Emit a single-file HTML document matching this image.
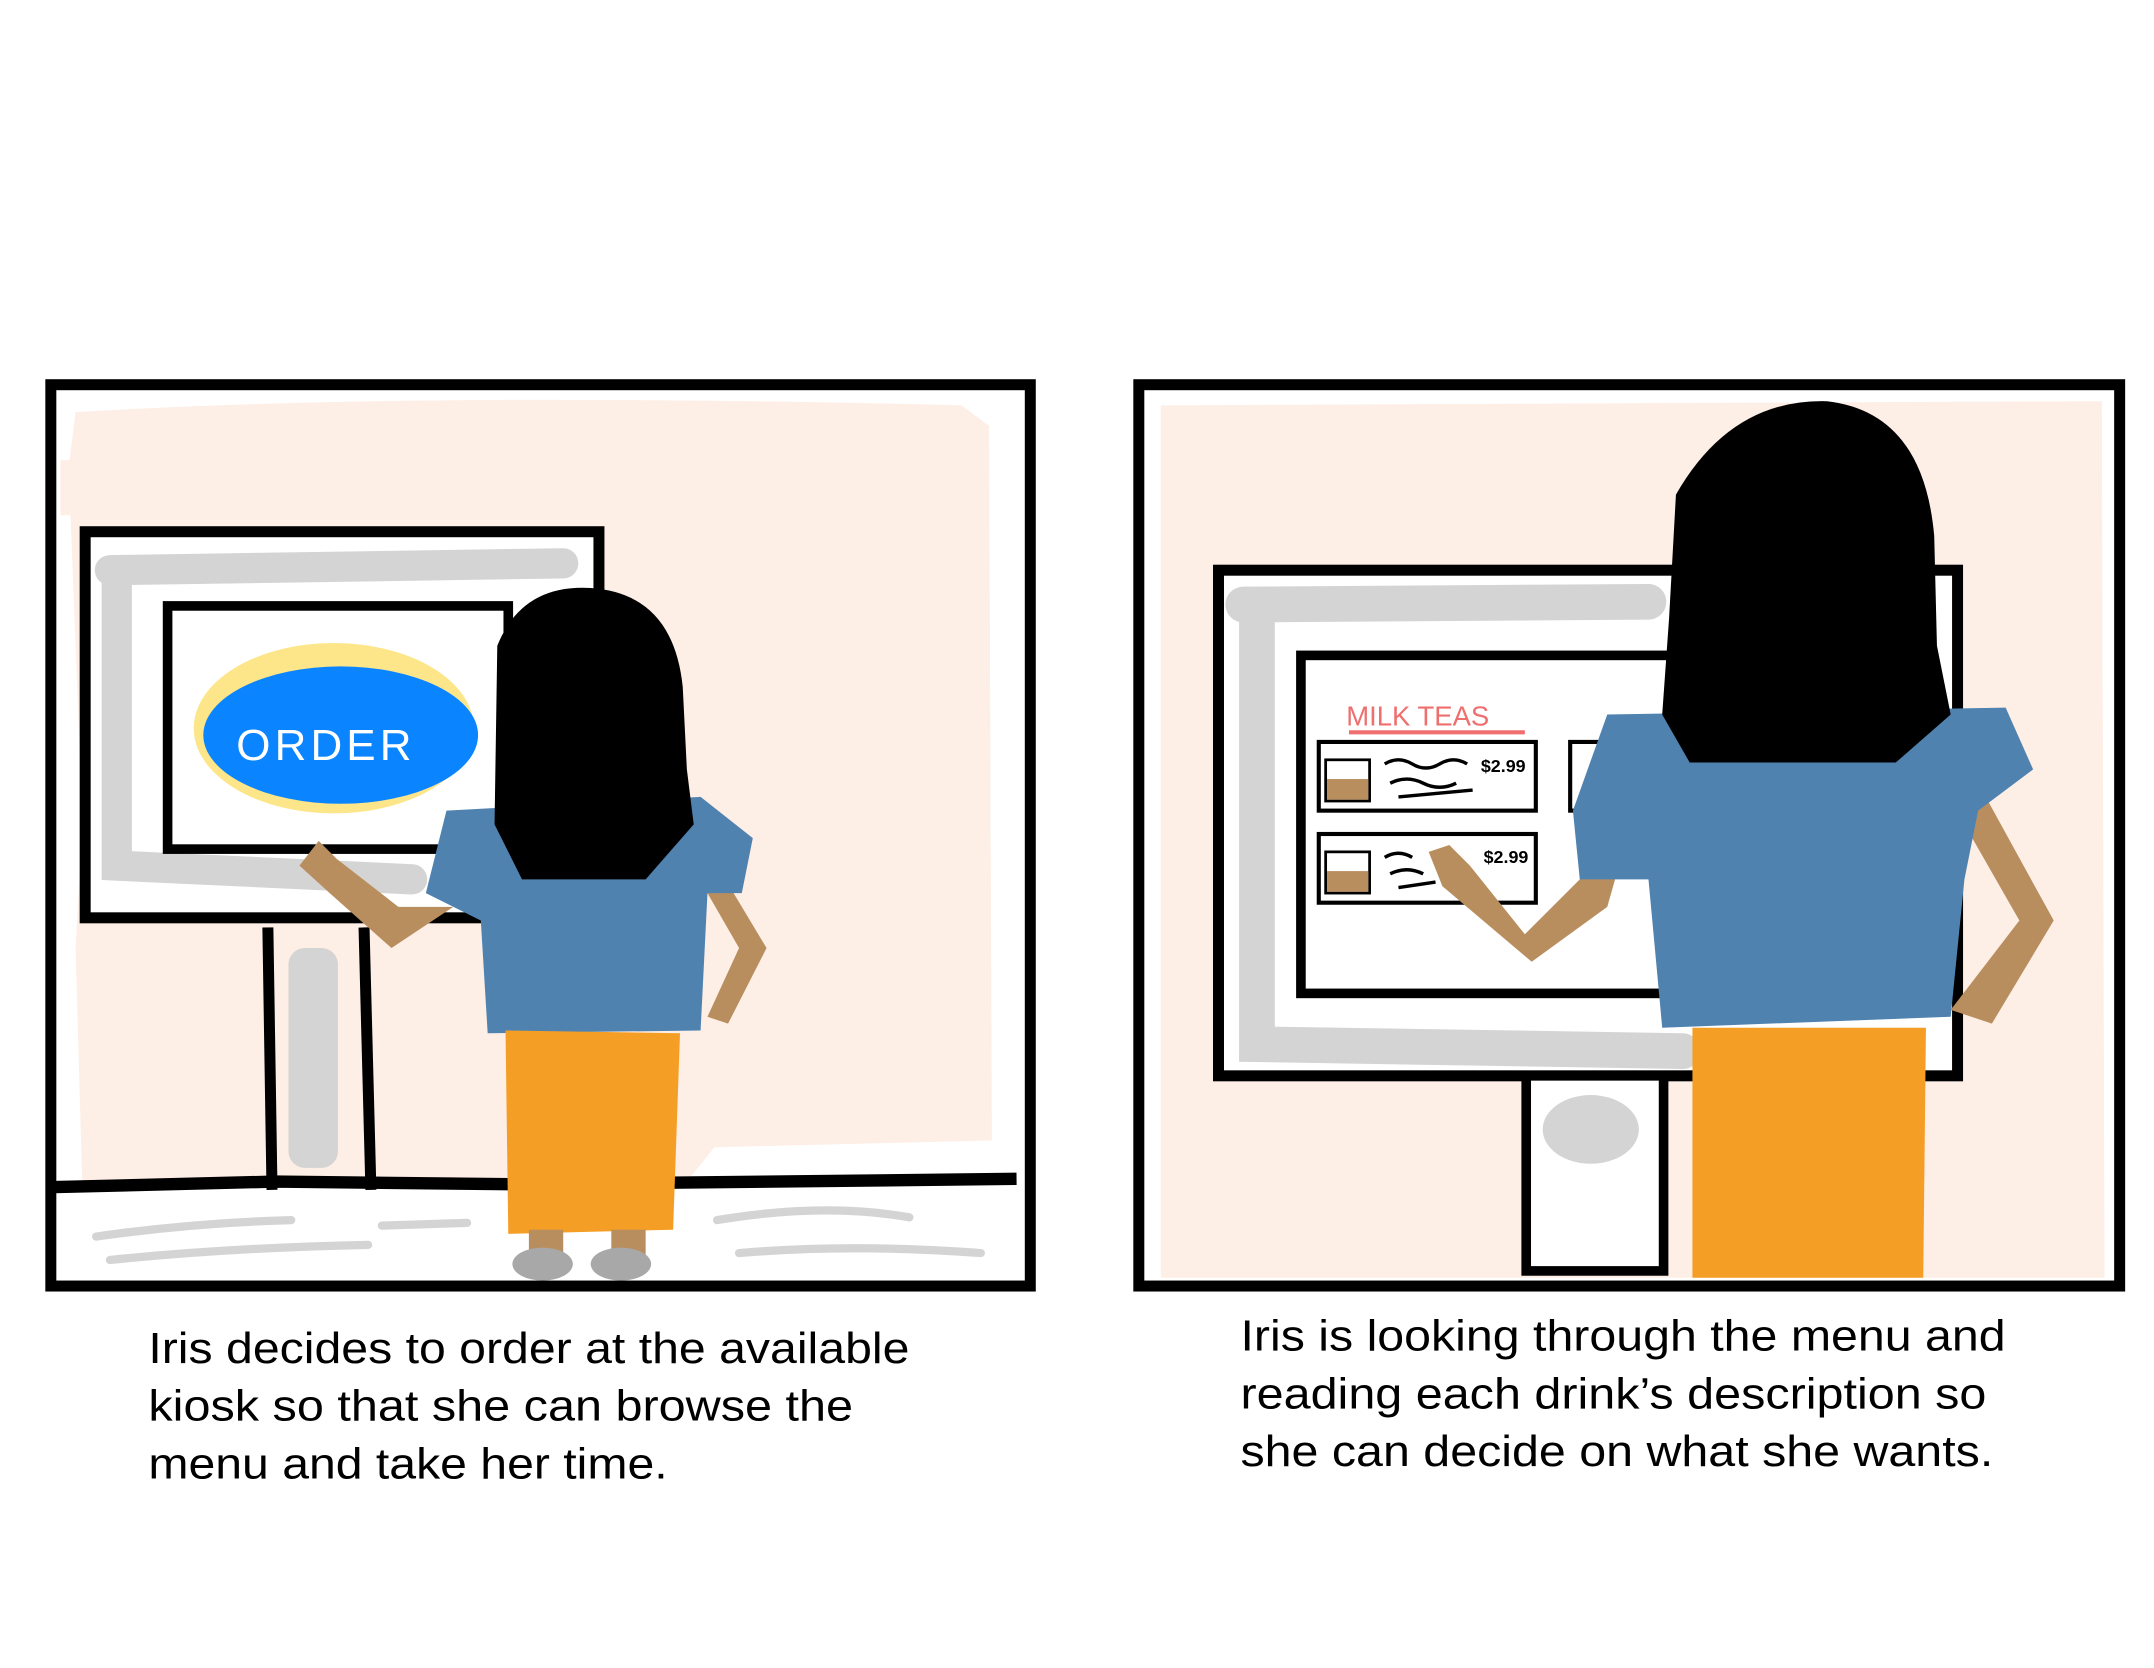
<!DOCTYPE html>
<html><head><meta charset="utf-8"><style>
html,body{margin:0;padding:0;background:#fff;width:2154px;height:1668px;overflow:hidden}
svg{display:block}
text{font-family:"Liberation Sans",sans-serif}
</style></head><body>
<svg width="2154" height="1668" viewBox="0 0 1568 1214" preserveAspectRatio="none" xmlns="http://www.w3.org/2000/svg">
<rect width="1568" height="1214" fill="#fff"/>
<!-- PANEL 1 -->
<g>
<path d="M55 300 Q300 285 700 295 L720 310 L722 830 L520 835 L500 860 L60 865 L55 690 L60 600 L50 340 Z" fill="#fdeee6"/>
<rect x="44" y="335" width="400" height="40" fill="#fdeee6"/>
<path d="M62 385 L436 385 L436 668 L62 668 Z" fill="#fff"/>
<path d="M80 415 L410 410 M85 420 L85 630 L300 640" stroke="#d4d4d4" stroke-width="22" fill="none" stroke-linecap="round"/>
<rect x="62" y="387" width="374" height="281" fill="none" stroke="#000" stroke-width="8"/>
<rect x="122" y="441" width="248" height="177" fill="#fff" stroke="#000" stroke-width="7"/>
<ellipse cx="243" cy="530" rx="102" ry="62" fill="#fde68a"/>
<ellipse cx="248" cy="535" rx="100" ry="50" fill="#0a84ff"/>
<text x="172" y="553" font-size="32" fill="#fff" letter-spacing="3">ORDER</text>
<rect x="210" y="690" width="36" height="160" fill="#d4d4d4" rx="12"/>
<line x1="195" y1="675" x2="198" y2="866" stroke="#000" stroke-width="8"/>
<line x1="265" y1="675" x2="270" y2="866" stroke="#000" stroke-width="8"/>
<path d="M40 864 L200 860 L380 862 L740 858" stroke="#000" stroke-width="9" fill="none"/>
<path d="M70 900 Q140 890 212 888 M80 917 Q170 908 268 906 M278 892 L340 890 M522 888 Q600 875 662 886 M538 912 Q620 905 714 912" stroke="#d4d4d4" stroke-width="6" fill="none" stroke-linecap="round"/>
<path d="M232 612 L218 630 L240 650 L285 690 L330 660 L290 660 L245 625 Z" fill="#b98e5f"/>
<path d="M528 640 L558 690 L530 745 L515 740 L538 690 L515 650 Z" fill="#b98e5f"/>
<path d="M325 590 L510 580 L548 610 L540 650 L515 650 L510 750 L355 752 L350 670 L310 650 Z" fill="#5082b0"/>
<path d="M368 750 L495 752 L490 895 L370 898 Z" fill="#f59e25"/>
<rect x="385" y="895" width="25" height="20" fill="#b98e5f"/><rect x="445" y="895" width="25" height="20" fill="#b98e5f"/>
<ellipse cx="395" cy="920" rx="22" ry="12" fill="#a8a8a8"/><ellipse cx="452" cy="920" rx="22" ry="12" fill="#a8a8a8"/>
<path d="M362 470 Q380 425 430 428 Q490 432 497 500 L500 560 L505 600 L470 640 L380 640 L360 600 Z" fill="#000"/>
<rect x="37" y="280" width="713" height="656" fill="none" stroke="#000" stroke-width="8"/>
</g>
<!-- PANEL 2 -->
<g>
<path d="M845 295 L1530 292 L1532 930 L845 930 Z" fill="#fdeee6"/>
<rect x="887" y="415" width="538" height="368" fill="#fff"/>
<path d="M905 440 L1200 438 M915 450 L915 760 L1225 765" stroke="#d4d4d4" stroke-width="26" fill="none" stroke-linecap="round"/>
<rect x="887" y="415" width="538" height="368" fill="none" stroke="#000" stroke-width="8"/>
<rect x="947" y="477" width="278" height="246" fill="#fff" stroke="#000" stroke-width="7"/>
<rect x="1111" y="783" width="100" height="142" fill="#fff" stroke="#000" stroke-width="7"/>
<ellipse cx="1158" cy="822" rx="35" ry="25" fill="#d4d4d4"/>
<text x="980" y="528" font-size="20" fill="#ef6f6f">MILK  TEAS</text>
<line x1="982" y1="533" x2="1110" y2="533" stroke="#ef6f6f" stroke-width="3"/>
<rect x="960" y="540" width="158" height="50" fill="none" stroke="#000" stroke-width="3"/>
<rect x="960" y="607" width="158" height="50" fill="none" stroke="#000" stroke-width="3"/>
<rect x="1143" y="540" width="40" height="50" fill="none" stroke="#000" stroke-width="3"/>
<rect x="965" y="553" width="32" height="30" fill="#fff" stroke="#000" stroke-width="2"/><rect x="966" y="567" width="30" height="15" fill="#b98e5f"/>
<rect x="965" y="620" width="32" height="30" fill="#fff" stroke="#000" stroke-width="2"/><rect x="966" y="634" width="30" height="15" fill="#b98e5f"/>
<path d="M1008 556 q10 -6 20 0 t20 0 t20 0 M1012 570 q12 -6 24 0 t24 0 M1018 580 L1072 575 M1008 624 q10 -6 20 0 M1012 636 q12 -6 24 0 M1018 646 L1045 642" stroke="#000" stroke-width="2.5" fill="none"/>
<text x="1078" y="562" font-size="13" font-weight="bold">$2.99</text>
<text x="1080" y="628" font-size="13" font-weight="bold">$2.99</text>
<path d="M1040 620 L1055 615 L1070 630 L1110 680 L1150 640 L1180 625 L1170 660 L1115 700 L1050 645 Z" fill="#b98e5f"/>
<path d="M1440 570 L1495 670 L1450 745 L1420 735 L1470 670 L1430 600 Z" fill="#b98e5f"/>
<path d="M1170 520 L1460 515 L1480 560 L1440 590 L1430 640 L1420 740 L1210 748 L1200 640 L1150 640 L1145 590 Z" fill="#5082b0"/>
<path d="M1232 748 L1402 748 L1400 930 L1232 930 Z" fill="#f59e25"/>
<path d="M1220 360 Q1260 290 1330 292 Q1400 300 1408 390 L1410 470 L1420 520 L1380 555 L1230 555 L1210 520 L1215 450 Z" fill="#000"/>
<rect x="829" y="280" width="714" height="656" fill="none" stroke="#000" stroke-width="8"/>
</g>
<g font-size="32" fill="#000" lengthAdjust="spacingAndGlyphs">
<text x="108" y="992" textLength="554" lengthAdjust="spacingAndGlyphs">Iris decides to order at the available</text>
<text x="108" y="1034" textLength="513" lengthAdjust="spacingAndGlyphs">kiosk so that she can browse the</text>
<text x="108" y="1076" textLength="378" lengthAdjust="spacingAndGlyphs">menu and take her time.</text>
<text x="903" y="983" textLength="557" lengthAdjust="spacingAndGlyphs">Iris is looking through the menu and</text>
<text x="903" y="1025" textLength="543" lengthAdjust="spacingAndGlyphs">reading each drink’s description so</text>
<text x="903" y="1067" textLength="548" lengthAdjust="spacingAndGlyphs">she can decide on what she wants.</text>
</g>
</svg>
</body></html>
